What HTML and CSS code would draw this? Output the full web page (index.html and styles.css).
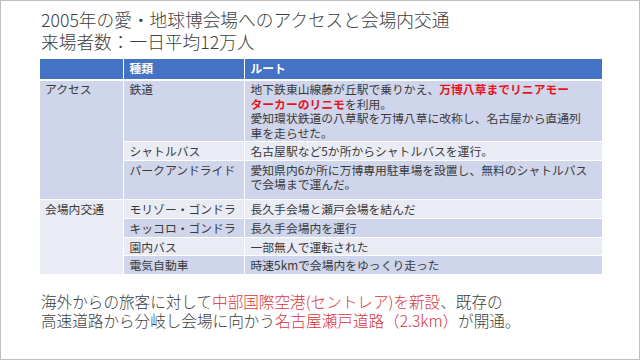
FILE: index.html
```html
<!DOCTYPE html>
<html lang="ja">
<head>
<meta charset="utf-8">
<link rel="stylesheet" href="styles.css">
</head>
<body>
<div class="slide">
  <h1 class="title">2005年の愛・地球博会場へのアクセスと会場内交通<br>来場者数：一日平均12万人</h1>
  <table class="tbl">
    <colgroup><col class="c1"><col class="c2"><col class="c3"></colgroup>
    <thead>
      <tr class="h"><th></th><th>種類</th><th>ルート</th></tr>
    </thead>
    <tbody>
      <tr class="r1 dk"><td rowspan="3" class="grp dk">アクセス</td><td>鉄道</td><td>地下鉄東山線藤が丘駅で乗りかえ、<b class="red">万博八草までリニアモー<br>ターカーのリニモ</b>を利用。<br>愛知環状鉄道の八草駅を万博八草に改称し、名古屋から直通列<br>車を走らせた。</td></tr>
      <tr class="r2 lt"><td>シャトルバス</td><td>名古屋駅など5か所からシャトルバスを運行。</td></tr>
      <tr class="r3 dk"><td>パークアンドライド</td><td>愛知県内6か所に万博専用駐車場を設置し、無料のシャトルバス<br>で会場まで運んだ。</td></tr>
      <tr class="r4 lt"><td rowspan="4" class="grp lt">会場内交通</td><td>モリゾー・ゴンドラ</td><td>長久手会場と瀬戸会場を結んだ</td></tr>
      <tr class="r5 dk"><td>キッコロ・ゴンドラ</td><td>長久手会場内を運行</td></tr>
      <tr class="r6 lt"><td>園内バス</td><td>一部無人で運転された</td></tr>
      <tr class="r7 dk"><td>電気自動車</td><td>時速5kmで会場内をゆっくり走った</td></tr>
    </tbody>
  </table>
  <p class="note">海外からの旅客に対して<span class="hl">中部国際空港(セントレア)を新設</span>、既存の<br>高速道路から分岐し会場に向かう<span class="hl">名古屋瀬戸道路（2.3km）</span>が開通。</p>
</div>
</body>
</html>
```
FILE: styles.css
```css
html, body {
  margin: 0;
  padding: 0;
  background: #ffffff;
}
.slide {
  width: 638px;
  height: 358px;
  border: 1px solid #bfbfbf;
  background: #ffffff;
  font-family: "Noto Sans CJK JP", "Noto Sans", sans-serif;
  color: #404040;
  overflow: hidden;
}
.title {
  margin: 7px 0 0 40px;
  font-size: 17.7px;
  line-height: 22px;
  font-weight: 300;
  color: #404040;
}
.tbl {
  margin: 7px 0 0 39px;
  width: 562px;
  border-collapse: collapse;
  table-layout: fixed;
  font-size: 11.8px;
  line-height: 14.5px;
  color: #3a3a3a;
}
.c1 { width: 83px; }
.c2 { width: 121px; }
.c3 { width: 358px; }
.tbl th, .tbl td {
  box-sizing: border-box;
  border: 1px solid #ffffff;
  padding: 2px 6px 0 6px;
  vertical-align: top;
  text-align: left;
  white-space: nowrap;
}
.tbl tr > :first-child { border-left: none; }
.tbl tr > :last-child { border-right: none; }
.tbl .grp { border-left: none; padding-left: 5px; }
.h th {
  background: #4472c4;
  color: #ffffff;
  font-weight: bold;
  height: 21px;
  border-top: none;
  border-bottom: 2px solid #ffffff;
  padding-top: 2px;
}
.dk td { background: #cfd5ea; }
.lt td { background: #e9ebf5; }
.tbl td.grp.dk { background: #cfd5ea; }
.tbl td.grp.lt { background: #e9ebf5; }
.r1 td { height: 61px; padding-top: 1px; }
.r2 td { height: 19px; }
.r3 td { height: 39px; }
.r4 td { height: 19px; }
.r5 td { height: 19px; }
.r6 td { height: 18px; }
.r7 td { height: 19px; border-bottom: none; }
.red {
  color: #e8141c;
  font-weight: bold;
}
.note {
  margin: 17px 0 0 40px;
  font-size: 15.6px;
  line-height: 19px;
  font-weight: 300;
  color: #404040;
}
.hl { color: #d9353a; }
```
